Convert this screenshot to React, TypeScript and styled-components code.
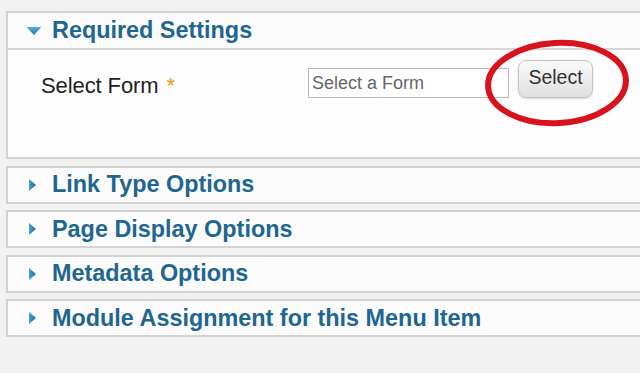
import styled, { createGlobalStyle } from 'styled-components';

const GlobalStyle = createGlobalStyle`
  html, body {
    margin: 0;
    padding: 0;
    background: #f2f2f2;
    overflow: hidden;
  }
  body {
    font-family: 'Liberation Sans', Arial, sans-serif;
  }
`;

const Page = styled.div`
  position: relative;
  width: 640px;
  height: 373px;
  padding: 11px 0 0 6px;
  box-sizing: border-box;
  display: flex;
  flex-direction: column;
  gap: 6.6px;
`;

const Panel = styled.section`
  width: 660px;
  background: #fbfbfb;
  border: 2px solid #d3d3d3;
  border-right: none;
  box-sizing: border-box;
`;

const PanelHeader = styled.div<{ $open?: boolean }>`
  height: ${({ $open }) => ($open ? '37px' : '34px')};
  display: flex;
  align-items: center;
  padding-left: 18px;
  gap: ${({ $open }) => ($open ? '10px' : '12px')};
  border-bottom: ${({ $open }) => ($open ? '2px solid #d6d6d6' : 'none')};
  box-sizing: border-box;
`;

const Title = styled.h3`
  margin: 0;
  font-size: 23.4px;
  font-weight: bold;
  color: #21668f;
`;

const PanelBody = styled.div`
  height: 107px;
  background: #fdfdfd;
  padding: 18px 0 0 33px;
  box-sizing: border-box;
`;

const FieldRow = styled.div`
  display: flex;
  align-items: flex-start;
`;

const Label = styled.label`
  width: 267px;
  margin-top: 5px;
  font-size: 22px;
  color: #222;
  letter-spacing: -0.1px;
`;

const Star = styled.span`
  color: #e39b2e;
  margin-left: 8px;
`;

const TextInput = styled.input`
  width: 201px;
  height: 30px;
  box-sizing: border-box;
  border: 1px solid #b9b9b9;
  background: #fff;
  font-family: 'Liberation Sans', Arial, sans-serif;
  font-size: 18px;
  padding: 1px 3px 0;
  &::placeholder {
    color: #666;
  }
`;

const Button = styled.button`
  margin-left: 9px;
  margin-top: -8px;
  width: 75px;
  height: 38px;
  border: 1px solid #c4c4c4;
  border-radius: 8px;
  background: linear-gradient(#fafafa, #e0e0e0);
  box-shadow: 0 1px 2px rgba(0, 0, 0, 0.15);
  font-family: 'Liberation Sans', Arial, sans-serif;
  font-size: 19.5px;
  color: #333;
  padding: 0 0 4px;
`;

const Circle = styled.svg`
  position: absolute;
  left: 484px;
  top: 38px;
`;

const Arrow = ({ open }: { open?: boolean }) =>
  open ? (
    <svg width="16" height="10" viewBox="0 0 16 10">
      <defs>
        <linearGradient id="ad" x1="0" y1="0" x2="0" y2="1">
          <stop offset="0" stopColor="#4fb0d6" />
          <stop offset="1" stopColor="#1d7aa6" />
        </linearGradient>
      </defs>
      <polygon points="0.5,1 15.5,1 8,9" fill="url(#ad)" />
    </svg>
  ) : (
    <svg width="14" height="14" viewBox="0 0 14 14">
      <defs>
        <linearGradient id="ar" x1="0" y1="0" x2="1" y2="0">
          <stop offset="0" stopColor="#43a5cf" />
          <stop offset="1" stopColor="#1a6d96" />
        </linearGradient>
      </defs>
      <polygon points="3,1 10,7 3,13" fill="url(#ar)" />
    </svg>
  );

const sections = [
  'Link Type Options',
  'Page Display Options',
  'Metadata Options',
  'Module Assignment for this Menu Item',
];

export default function App() {
  return (
    <>
      <GlobalStyle />
      <Page>
        <Panel>
          <PanelHeader $open>
            <Arrow open />
            <Title>Required Settings</Title>
          </PanelHeader>
          <PanelBody>
            <FieldRow>
              <Label>
                Select Form<Star>*</Star>
              </Label>
              <TextInput placeholder="Select a Form" />
              <Button>Select</Button>
            </FieldRow>
          </PanelBody>
        </Panel>
        {sections.map((s) => (
          <Panel key={s}>
            <PanelHeader>
              <Arrow />
              <Title>{s}</Title>
            </PanelHeader>
          </Panel>
        ))}
        <Circle width="150" height="92" viewBox="0 0 150 92">
          <ellipse
            cx="73"
            cy="45"
            rx="69"
            ry="40"
            fill="none"
            stroke="#d9131d"
            strokeWidth="6"
            transform="rotate(-3 73 45)"
          />
        </Circle>
      </Page>
    </>
  );
}
